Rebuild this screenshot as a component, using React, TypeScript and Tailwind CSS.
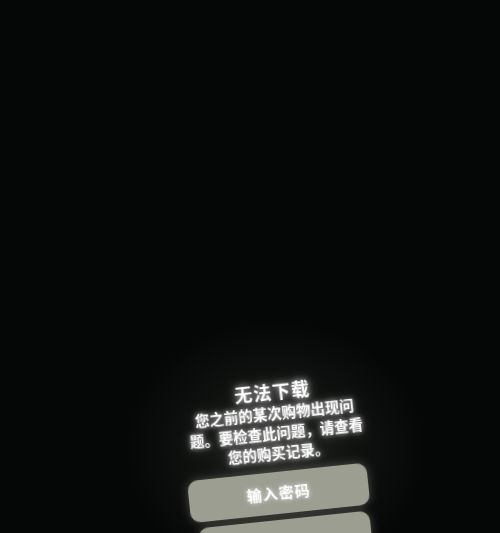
import React from "react";

export default function App() {
  const font = "font-['Noto_Sans_CJK_SC','Noto_Sans',sans-serif]";
  return (
    <div
      className={`w-[500px] h-[533px] overflow-hidden bg-[#050606] ${font} bg-[radial-gradient(ellipse_150px_130px_at_275px_450px,#262825_0%,#111311_50%,#050606_100%)]`}
    >
      <div className="pt-[379px] pl-[182px]">
        <div className="w-[180px] -rotate-6 origin-[50%_12px] flex flex-col items-center blur-[0.4px]">
          <div className="h-[24px] leading-[24px] text-[18px] font-bold text-white tracking-[1px] [text-shadow:0_0_6px_rgba(255,255,255,0.8),0_0_14px_rgba(255,255,255,0.4)]">
            无法下载
          </div>
          <div className="text-center text-[14.5px] leading-[20px] font-bold text-white whitespace-nowrap [text-shadow:0_0_5px_rgba(255,255,255,0.8),0_0_12px_rgba(255,255,255,0.35)]">
            您之前的某次购物出现问
            <br />
            题。要检查此问题，请查看
            <br />
            您的购买记录。
          </div>
          <div className="mt-[9px] mr-[8px] w-[180px] h-[42px] rounded-[10px] bg-[#9c9e92] flex items-center justify-center shadow-[0_0_10px_rgba(200,200,190,0.35)]">
            <span className="text-[15px] font-bold text-white tracking-[1px] [text-shadow:0_0_5px_rgba(255,255,255,0.8)]">
              输入密码
            </span>
          </div>
          <div className="mt-[6px] mr-[4px] w-[172px] h-[42px] rounded-[10px] bg-[#9c9e92] shadow-[0_0_10px_rgba(200,200,190,0.35)]" />
        </div>
      </div>
    </div>
  );
}
